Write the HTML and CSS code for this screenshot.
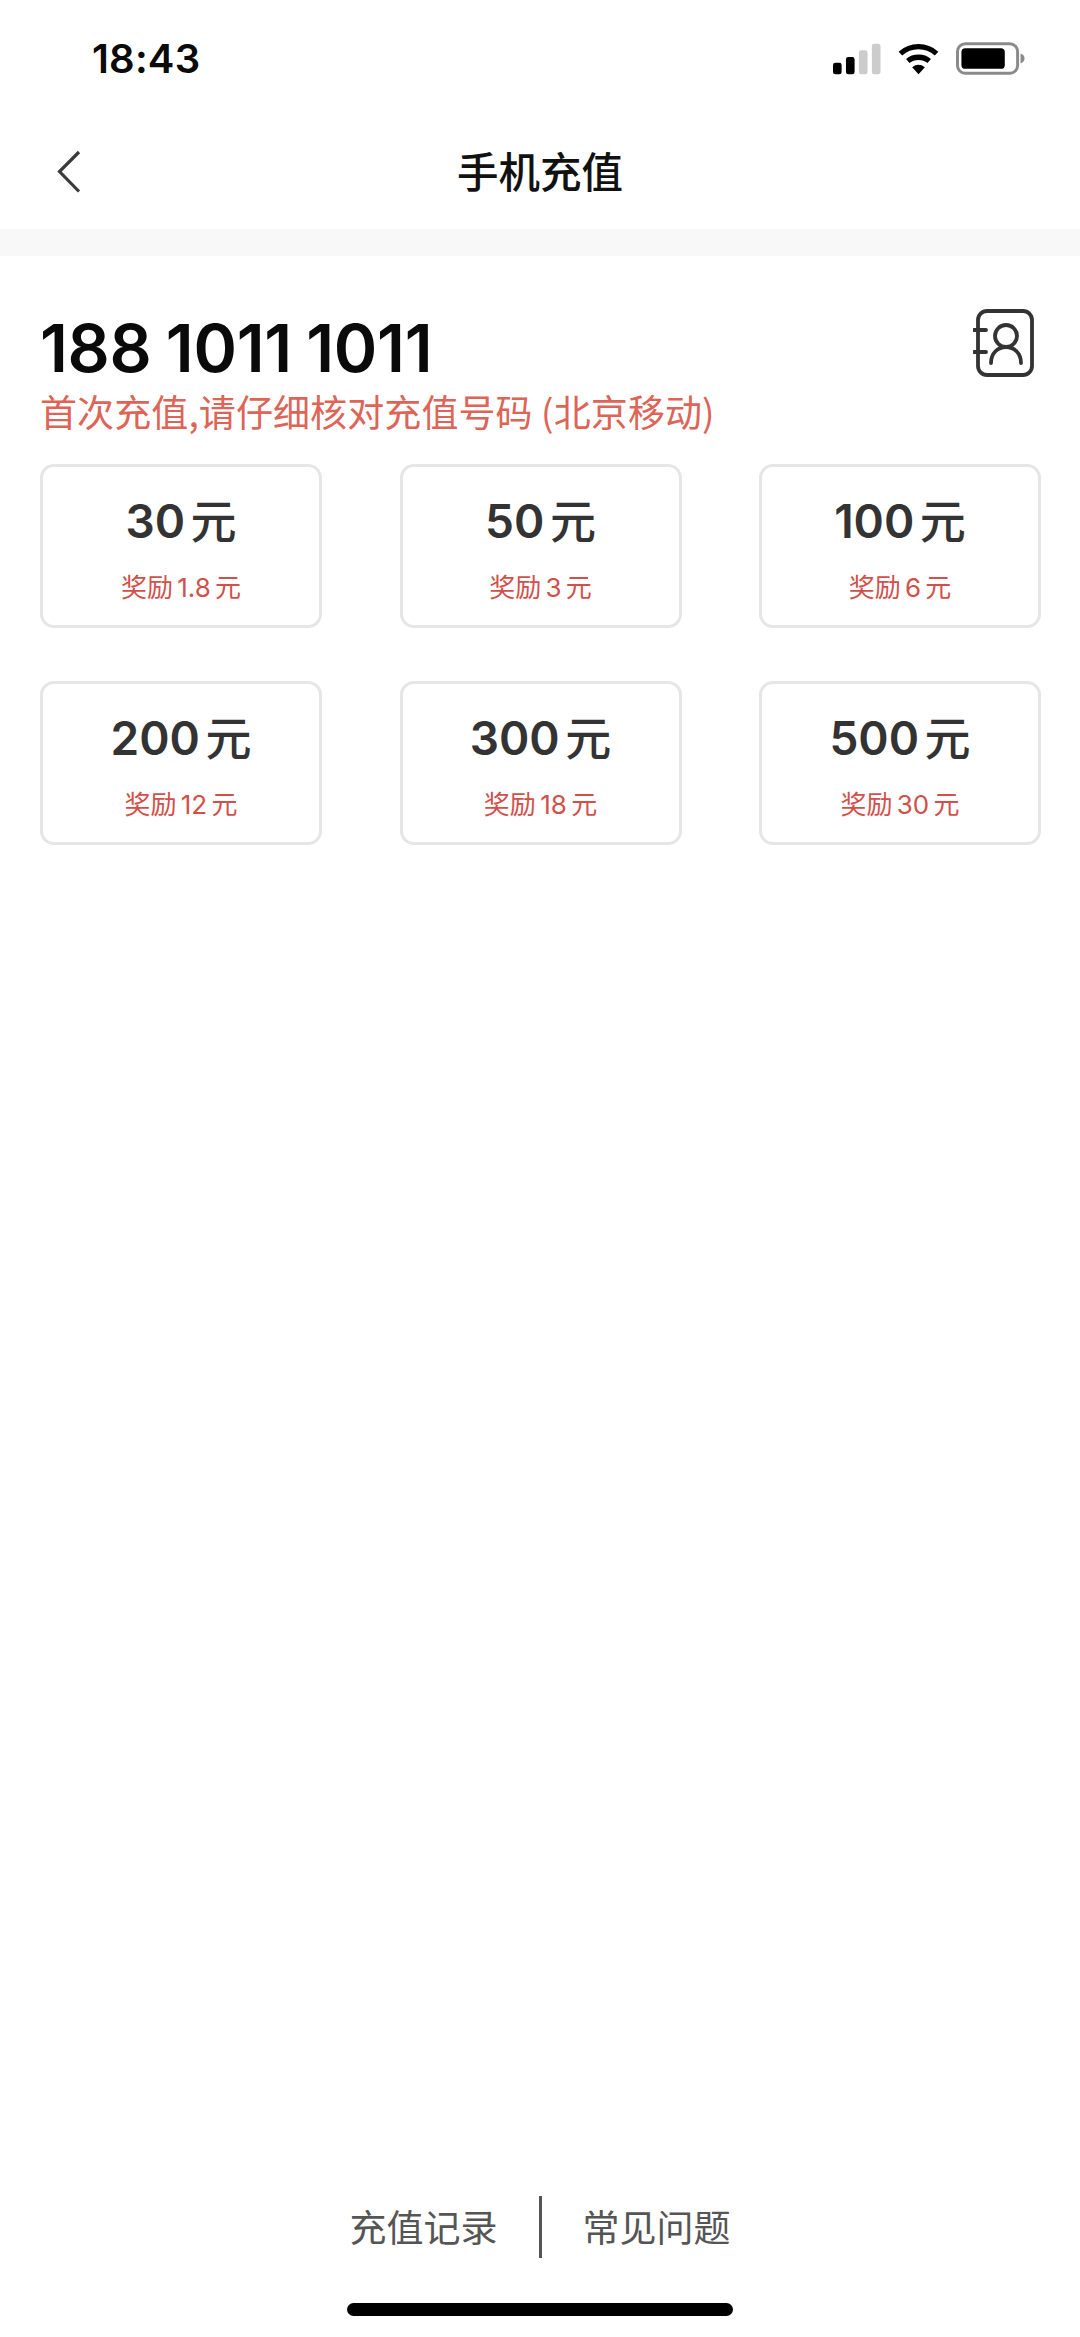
FILE: index.html
```html
<!DOCTYPE html>
<html lang="zh-CN">
<head>
<meta charset="utf-8">
<title>手机充值</title>
<link rel="stylesheet" href="styles.css">
</head>
<body>
<div class="app">
  <div class="status">
    <span class="time">18:43</span>
    <div class="status-icons">
      <svg class="sig" width="48" height="32" viewBox="0 0 50 32"><rect x="0" y="20" width="9" height="12" rx="2.5" fill="#000"/><rect x="13.500" y="14" width="9" height="18" rx="2.500" fill="#000"/><rect x="27" y="7" width="9" height="25" rx="2.500" fill="#ccc"/><rect x="40.500" y="0" width="9" height="32" rx="2.500" fill="#ccc"/></svg>
      <svg class="wifi" width="41" height="32" viewBox="0 0 42 32"><path d="M2.500 10.500C13 1 29 1 39.500 10.500" fill="none" stroke="#000" stroke-width="5.500"/><path d="M10 18C16 13 26 13 32 18" fill="none" stroke="#000" stroke-width="5.500"/><path d="M14.500 24.500Q21 19.500 27.500 24.500L21 31.500Z" fill="#000"/></svg>
      <svg class="batt" width="69" height="34" viewBox="0 0 70 34"><rect x="1.500" y="1.500" width="61" height="30" rx="8" fill="none" stroke="#8a8a8a" stroke-width="3"/><rect x="5.500" y="6" width="44" height="21" rx="4" fill="#000"/><path d="M65.500 11.500C68.500 12.500 69.500 14.500 69.500 16.500C69.500 18.500 68.500 20.500 65.500 21.500Z" fill="#8a8a8a"/></svg>
    </div>
  </div>
  <header class="nav">
    <svg class="back" width="24" height="44" viewBox="0 0 24 44"><path d="M22 2L2.500 21.500L22 41.500" fill="none" stroke="#3a3a3a" stroke-width="3.200"/></svg>
    <h1 class="title">手机充值</h1>
  </header>
  <div class="band"></div>
  <main class="main">
    <div class="phone-row">
      <div>
        <div class="phone">188 1011 1011</div>
        <div class="hint">首次充值,请仔细核对充值号码 (北京移动)</div>
      </div>
      <svg class="contact" width="62" height="70" viewBox="0 0 60 70"><rect x="4" y="2" width="54" height="64" rx="9" fill="none" stroke="#333" stroke-width="3.800"/><path d="M0 21H12M0 43H12" stroke="#333" stroke-width="3.800" stroke-linecap="round"/><circle cx="32" cy="27" r="11" fill="none" stroke="#333" stroke-width="3.800"/><path d="M17 54C17 44 24 38 32 38C40 38 47 44 47 54" fill="none" stroke="#333" stroke-width="3.800" stroke-linecap="round"/></svg>
    </div>
    <div class="grid">
      <div class="card"><div class="amt">30 <span class="yuan">元</span></div><div class="bonus">奖励 1.8 元</div></div>
      <div class="card"><div class="amt">50 <span class="yuan">元</span></div><div class="bonus">奖励 3 元</div></div>
      <div class="card"><div class="amt">100 <span class="yuan">元</span></div><div class="bonus">奖励 6 元</div></div>
      <div class="card"><div class="amt">200 <span class="yuan">元</span></div><div class="bonus">奖励 12 元</div></div>
      <div class="card"><div class="amt">300 <span class="yuan">元</span></div><div class="bonus">奖励 18 元</div></div>
      <div class="card"><div class="amt">500 <span class="yuan">元</span></div><div class="bonus">奖励 30 元</div></div>
    </div>
  </main>
  <footer class="foot">
    <a class="link left">充值记录</a>
    <span class="sep"></span>
    <a class="link right">常见问题</a>
  </footer>
  <div class="home-wrap"><div class="home"></div></div>
</div>
</body>
</html>
```
FILE: styles.css
```css
* { box-sizing: border-box; }
html, body { margin: 0; padding: 0; background: #fff; }
body { font-family: Inter, "Noto Sans CJK SC", sans-serif; }
.app { width: 1080px; height: 2337px; display: flex; flex-direction: column; overflow: hidden; background: #fff; }
.status { height: 116px; flex: none; display: flex; align-items: center; justify-content: space-between; padding: 2px 55px 0 92px; }
.time { font-size: 40px; font-weight: 600; color: #0a0a0a; line-height: 1; letter-spacing: 0.2px; }
.status-icons { display: flex; align-items: center; gap: 17px; }
.nav { height: 113px; flex: none; display: flex; align-items: center; justify-content: center; position: relative; }
.back { position: absolute; left: 57px; top: 34px; }
.title { margin: -3px 0 0; font-size: 41.5px; font-weight: 500; color: #111; line-height: 1; font-family: "Noto Sans CJK SC", sans-serif; }
.band { height: 27px; flex: none; background: #f8f8f8; }
.main { flex: 1; padding: 53px 39px 0 40px; }
.phone-row { display: flex; justify-content: space-between; align-items: flex-start; height: 155px; }
.contact { margin: 0 6px 0 0; }
.phone { font-size: 66px; font-weight: 600; color: #0a0a0a; line-height: 78px; letter-spacing: -0.3px; word-spacing: -2px; white-space: nowrap; }
.hint { font-size: 37px; color: #dd6456; line-height: 50px; letter-spacing: 0.1px; white-space: nowrap; font-family: "Noto Sans CJK SC", sans-serif; margin-top: -1px; }
.grid { display: grid; grid-template-columns: repeat(3, 282px); justify-content: space-between; row-gap: 53px; }
.card { height: 164px; border: 3px solid #e6e6e6; border-radius: 14px; display: flex; flex-direction: column; align-items: center; padding-top: 21px; }
.amt { font-size: 46px; font-weight: 600; color: #333; line-height: 60px; white-space: nowrap; word-spacing: -6px; }
.yuan { font-family: "Noto Sans CJK SC", sans-serif; font-weight: 500; }
.bonus { font-size: 26px; color: #d2504a; line-height: 34px; margin-top: 20px; white-space: nowrap; word-spacing: -3px; }
.foot { flex: none; height: 62px; display: flex; justify-content: center; align-items: center; }
.link { font-size: 37px; color: #555; line-height: 1; width: 148px; white-space: nowrap; font-family: "Noto Sans CJK SC", sans-serif; margin-top: -2px; }
.left { margin-right: 41px; }
.right { margin-left: 41px; }
.sep { width: 3px; height: 62px; background: #555; flex: none; }
.home-wrap { flex: none; height: 79px; padding-top: 45px; display: flex; justify-content: center; }
.home { width: 386px; height: 13px; border-radius: 7px; background: #000; }
```
